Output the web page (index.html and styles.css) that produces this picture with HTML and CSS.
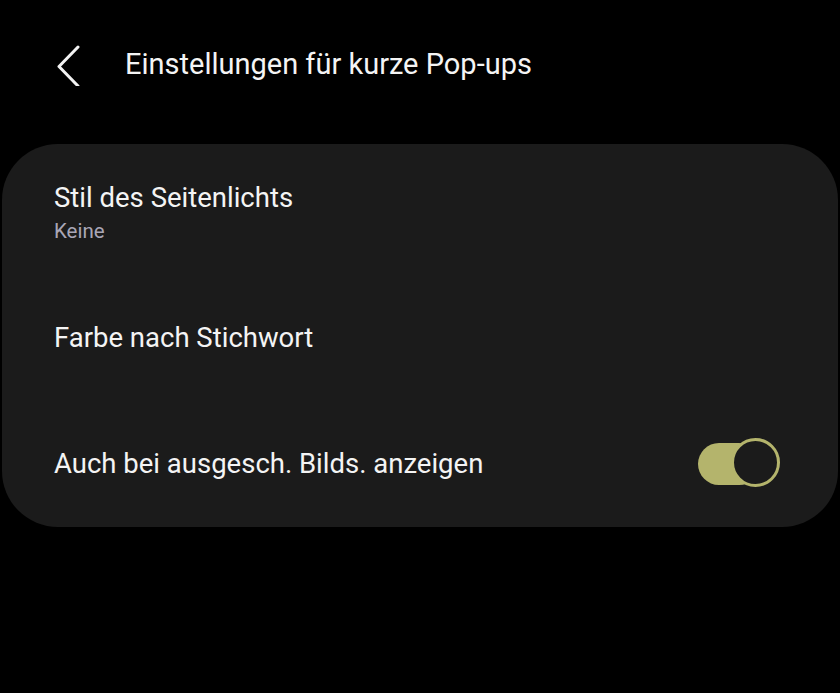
FILE: index.html
```html
<!DOCTYPE html>
<html lang="de">
<head>
<meta charset="utf-8">
<link rel="stylesheet" href="styles.css">
</head>
<body>
<div class="screen">
  <header class="topbar">
    <svg class="back" width="30" height="44" viewBox="0 0 30 44">
      <polyline points="21,5 2,24.5 21,44" fill="none" stroke="#f2f2f2" stroke-width="3" stroke-linecap="round" stroke-linejoin="round"/>
    </svg>
    <h1 class="title">Einstellungen für kurze Pop-ups</h1>
  </header>
  <section class="card">
    <div class="row">
      <div class="texts">
        <div class="label">Stil des Seitenlichts</div>
        <div class="sub">Keine</div>
      </div>
    </div>
    <div class="row">
      <div class="texts">
        <div class="label">Farbe nach Stichwort</div>
      </div>
    </div>
    <div class="row">
      <div class="texts">
        <div class="label">Auch bei ausgesch. Bilds. anzeigen</div>
      </div>
      <div class="switch"><span class="knob"></span></div>
    </div>
  </section>
</div>
</body>
</html>
```

FILE: styles.css
```css
html, body {
  margin: 0;
  padding: 0;
  background: #000;
}
body {
  width: 840px;
  height: 693px;
  overflow: hidden;
  font-family: Roboto, "Noto Sans", sans-serif;
  color: #f4f4f4;
}
.screen {
  display: flex;
  flex-direction: column;
}
.topbar {
  height: 128px;
  display: flex;
  align-items: center;
  padding-left: 57px;
  box-sizing: border-box;
}
.back {
  display: block;
}
.title {
  margin: 0 0 0 38px;
  font-size: 29px;
  font-weight: 400;
}
.card {
  margin: 16px 2px 0 2px;
  padding-top: 5px;
  background: #1b1b1b;
  border-radius: 56px;
  display: flex;
  flex-direction: column;
}
.row {
  height: 126px;
  display: flex;
  align-items: center;
  padding: 0 58px 0 52px;
  box-sizing: border-box;
}
.texts {
  flex: 1;
}
.label {
  font-size: 27.5px;
  line-height: 34px;
}
.sub {
  font-size: 20.5px;
  line-height: 24px;
  color: #a9a6b6;
  margin-top: 4px;
}
.switch {
  position: relative;
  width: 82px;
  height: 50px;
  margin-top: -2px;
}
.switch::before {
  content: "";
  position: absolute;
  left: 0;
  top: 5px;
  width: 62px;
  height: 42px;
  border-radius: 21px;
  background: #b4b46c;
}
.knob {
  position: absolute;
  right: 0;
  top: 0;
  width: 43px;
  height: 43px;
  border-radius: 50%;
  background: #1b1b1b;
  border: 3px solid #b4b46c;
}
```
